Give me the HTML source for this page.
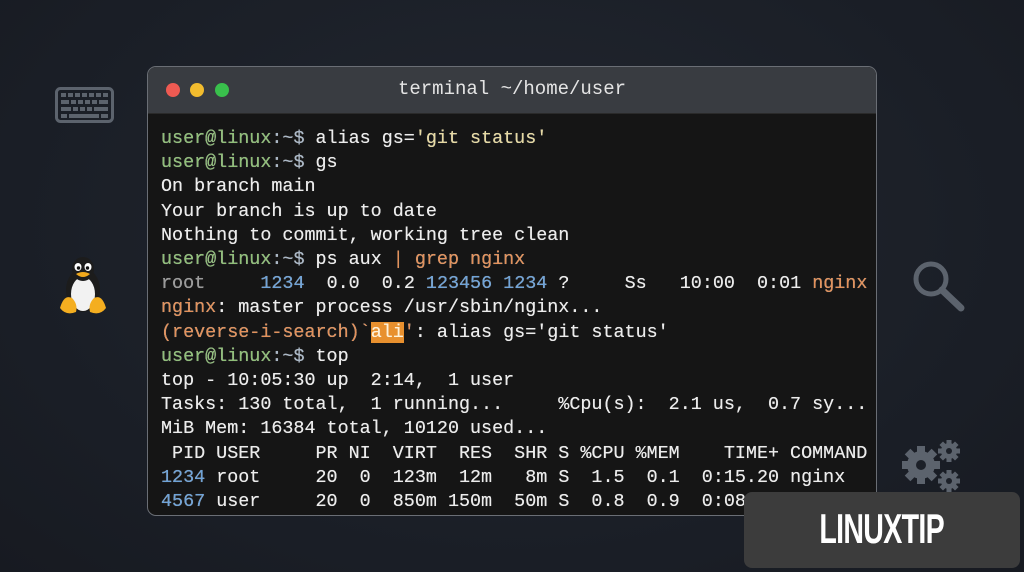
<!DOCTYPE html>
<html><head><meta charset="utf-8"><style>
html,body{margin:0;padding:0}
body{width:1024px;height:572px;overflow:hidden;background:radial-gradient(ellipse at 50% 40%,#222730 0%,#1a1e26 70%,#171a21 100%);position:relative;font-family:"Liberation Mono",monospace}
.win{position:absolute;left:147px;top:66px;width:728px;height:448px;border:1px solid #6a6e75;border-radius:9px;overflow:hidden;background:#151515}
.tb{height:46px;background:#393c41;border-bottom:1px solid #2a2a2a;position:relative}
.dot{position:absolute;top:16px;width:14px;height:14px;border-radius:50%}
.tt{position:absolute;left:0;right:0;top:11px;text-align:center;color:#e4e4e4;font-size:19px}
.body{position:absolute;left:13px;top:60px;font-size:18.4px;line-height:24.2px;color:#ececec;white-space:pre;text-shadow:0 0 0.4px #ececec}
.g{color:#8fbf78}.p{color:#a9b7c6}.y{color:#e6d9a2}.o{color:#e3915a}.b{color:#6fa3d8}.gr{color:#9a9a9a}
.hl{background:#e8902e;color:#fff2d8}
.badge{position:absolute;left:744px;top:492px;width:276px;height:76px;background:#3c3c3c;border-radius:8px;color:#fff;font-family:"Liberation Sans",sans-serif;font-weight:bold;font-size:42px;text-align:center;line-height:74px}
.badge span{display:inline-block;transform:scaleX(.68);letter-spacing:-1px}
svg{position:absolute}
</style></head><body>
<svg style="left:55px;top:87px" width="59" height="36" viewBox="0 0 59 36">
<rect x="1.5" y="1.5" width="56" height="33" rx="4" fill="none" stroke="#5c636d" stroke-width="3"/>
<g fill="#5c636d">
<rect x="6" y="6" width="5" height="4"/><rect x="13" y="6" width="5" height="4"/><rect x="20" y="6" width="5" height="4"/><rect x="27" y="6" width="5" height="4"/><rect x="34" y="6" width="5" height="4"/><rect x="41" y="6" width="5" height="4"/><rect x="48" y="6" width="5" height="4"/>
<rect x="6" y="13" width="8" height="4"/><rect x="16" y="13" width="5" height="4"/><rect x="23" y="13" width="5" height="4"/><rect x="30" y="13" width="5" height="4"/><rect x="37" y="13" width="5" height="4"/><rect x="44" y="13" width="9" height="4"/>
<rect x="6" y="20" width="10" height="4"/><rect x="18" y="20" width="5" height="4"/><rect x="25" y="20" width="5" height="4"/><rect x="32" y="20" width="5" height="4"/><rect x="39" y="20" width="14" height="4"/>
<rect x="6" y="27" width="6" height="4"/><rect x="14" y="27" width="30" height="4"/><rect x="46" y="27" width="7" height="4"/>
</g></svg>
<svg style="left:56px;top:254px" width="54" height="62" viewBox="0 0 54 62">
<ellipse cx="27" cy="36" rx="17" ry="22" fill="#1c1c1c"/>
<ellipse cx="27" cy="40" rx="12" ry="17" fill="#f2f2f2"/>
<ellipse cx="27" cy="15" rx="11" ry="12" fill="#1c1c1c"/>
<ellipse cx="22" cy="13" rx="3.5" ry="4" fill="#fff"/><ellipse cx="32" cy="13" rx="3.5" ry="4" fill="#fff"/>
<circle cx="22.5" cy="14" r="1.7" fill="#111"/><circle cx="31.5" cy="14" r="1.7" fill="#111"/>
<path d="M20 20 Q27 16 34 20 Q27 26 20 20Z" fill="#f0a81c"/>
<path d="M4 54 Q8 40 16 44 Q22 50 20 58 Q10 62 4 54Z" fill="#f4ae20"/>
<path d="M50 54 Q46 40 38 44 Q32 50 34 58 Q44 62 50 54Z" fill="#f4ae20"/>
</svg>
<svg style="left:910px;top:259px" width="58" height="56" viewBox="0 0 58 56">
<circle cx="21" cy="20" r="15" fill="none" stroke="#5c636d" stroke-width="5"/>
<line x1="32" y1="31" x2="51" y2="49" stroke="#5c636d" stroke-width="7" stroke-linecap="round"/>
</svg>
<svg style="left:900px;top:438px" width="64" height="60" viewBox="0 0 64 60">
<g fill="#5c636d">
<circle cx="21" cy="27" r="14"/>
<g transform="translate(21 27)"><rect x="-4" y="-19" width="8" height="38"/><rect x="-19" y="-4" width="38" height="8"/><rect x="-4" y="-19" width="8" height="38" transform="rotate(45)"/><rect x="-4" y="-19" width="8" height="38" transform="rotate(-45)"/></g>
<circle cx="49" cy="13" r="8"/>
<g transform="translate(49 13)"><rect x="-2.5" y="-11" width="5" height="22"/><rect x="-11" y="-2.5" width="22" height="5"/><rect x="-2.5" y="-11" width="5" height="22" transform="rotate(45)"/><rect x="-2.5" y="-11" width="5" height="22" transform="rotate(-45)"/></g>
<circle cx="49" cy="43" r="8"/>
<g transform="translate(49 43)"><rect x="-2.5" y="-11" width="5" height="22"/><rect x="-11" y="-2.5" width="22" height="5"/><rect x="-2.5" y="-11" width="5" height="22" transform="rotate(45)"/><rect x="-2.5" y="-11" width="5" height="22" transform="rotate(-45)"/></g>
</g>
<circle cx="21" cy="27" r="5" fill="#1c2028"/><circle cx="49" cy="13" r="3" fill="#1c2028"/><circle cx="49" cy="43" r="3" fill="#1c2028"/>
</svg>
<div class="win">
<div class="tb">
<div class="dot" style="left:18px;background:#ee5a52"></div>
<div class="dot" style="left:42px;background:#f2bc2e"></div>
<div class="dot" style="left:67px;background:#39c04c"></div>
<div class="tt">terminal ~/home/user</div>
</div>
<div class="body"><span class="g">user@linux</span><span class="p">:~$</span> alias gs=<span class="y">'git status'</span>
<span class="g">user@linux</span><span class="p">:~$</span> gs
On branch main
Your branch is up to date
Nothing to commit, working tree clean
<span class="g">user@linux</span><span class="p">:~$</span> ps aux <span class="o">| grep nginx</span>
<span class="gr">root</span>     <span class="b">1234</span>  0.0  0.2 <span class="b">123456 1234</span> ?     Ss   10:00  0:01 <span class="o">nginx</span>
<span class="o">nginx</span>: master process /usr/sbin/nginx...
<span class="o">(reverse-i-search)`<span class="hl">ali</span>'</span>: alias gs='git status'
<span class="g">user@linux</span><span class="p">:~$</span> top
top - 10:05:30 up  2:14,  1 user
Tasks: 130 total,  1 running...     %Cpu(s):  2.1 us,  0.7 sy...
MiB Mem: 16384 total, 10120 used...
 PID USER     PR NI  VIRT  RES  SHR S %CPU %MEM    TIME+ COMMAND
<span class="b">1234</span> root     20  0  123m  12m   8m S  1.5  0.1  0:15.20 nginx
<span class="b">4567</span> user     20  0  850m 150m  50m S  0.8  0.9  0:08.12 node</div>
</div>
<div class="badge"><span>LINUXTIP</span></div>
</body></html>
